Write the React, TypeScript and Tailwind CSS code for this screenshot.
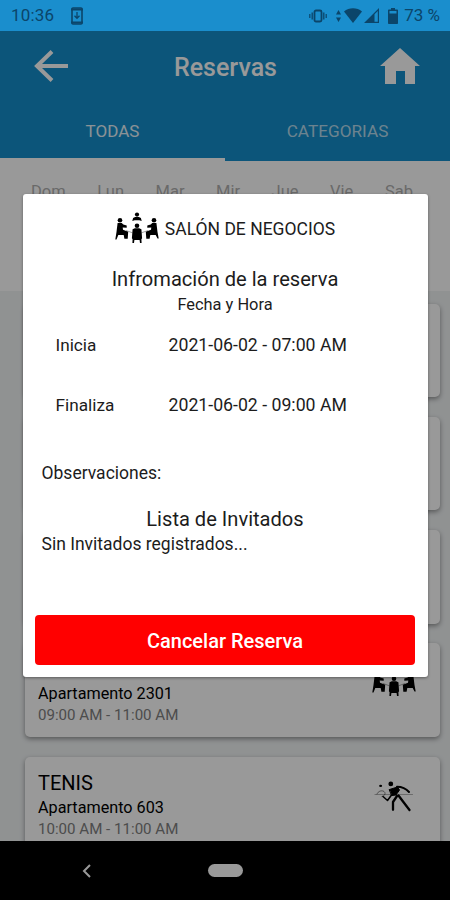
import type { ReactNode } from "react";

interface Booking {
  id: number;
  title?: string;
  unit?: string;
  time?: string;
  icon?: ReactNode;
}

function MeetingIcon({ className }: { className?: string }) {
  return (
    <svg viewBox="0 0 44 31" className={className} fill="currentColor">
      {/* back */}
      <circle cx="22" cy="2.6" r="2.100" />
      <path d="M17.300 9l.8-2.900 2-1.200h3.800l2 1.200.8 2.900-2.300-.7h-4.800z" />
      {/* left */}
      <circle cx="5" cy="8.300" r="2.300" />
      <path d="M2.600 11h4.200l1.500 1.600 3.400 1v2.200l-4-.3.300 2.300 5.200 2-.5 7H9.400l-.7-3.900H3.300L1.500 27.500H.3L1.500 20z" />
      {/* right */}
      <circle cx="39" cy="8.300" r="2.300" />
      <path d="M41.400 11h-4.200l-1.500 1.600-3.400 1v2.200l4-.3-.3 2.300-5.200 2 .5 7h3.300l.7-3.900h5.400l1.800 3.700h1.200L42.500 20z" />
      {/* front */}
      <circle cx="22" cy="13.800" r="2.300" />
      <path d="M17.600 17.300l2.200-1h4.400l2.200 1 .7 9-.7 1 .2 3.700H25l-.4-3h-5.200L19 31h-1.600l.2-3.700-.7-1z" />
      <path d="M11 18.500l6.500 2.300M33 18.500l-6.500 2.300" stroke="currentColor" strokeWidth=".7" opacity=".5" />
    </svg>
  );
}

function TennisIcon({ className }: { className?: string }) {
  return (
    <svg viewBox="0 0 40 31" className={className} fill="none" stroke="currentColor" strokeLinecap="round" strokeLinejoin="round">
      <circle cx="16.800" cy="2.900" r="2.400" fill="currentColor" stroke="none" />
      <ellipse cx="6.600" cy="4.900" rx="1.500" ry="1.100" fill="currentColor" stroke="none" />
      <path d="M1 13.500h37.500" strokeWidth="1.200" opacity=".3" />
      <path d="M3 13c1-3 5-4 7-2.500s1 4.500-2 5" strokeWidth=".9" opacity=".5" />
      <path d="M15.500 8.500l8-2.500 2 3-3.500 5-4 .5z" fill="currentColor" strokeWidth="1" />
      <path d="M23 5.700c5 0 9 1.800 12 5.300" strokeWidth="2" />
      <path d="M17.500 14l-4 5.500-4.500-4" strokeWidth="1.500" />
      <path d="M24.500 14.500l4.500 6 6.500 8.500" strokeWidth="2.300" />
      <path d="M23 15l-4 6v7.800" strokeWidth="2.300" />
    </svg>
  );
}

const days = ["Dom", "Lun", "Mar", "Mir", "Jue", "Vie", "Sab"];

const bookings: Booking[] = [
  { id: 1 },
  { id: 2 },
  { id: 3 },
  {
    id: 4,
    unit: "Apartamento 2301",
    time: "09:00 AM - 11:00 AM",
    icon: <MeetingIcon className="mr-[12px] mt-[22px] h-[31px] w-[44px]" />,
  },
  {
    id: 5,
    title: "TENIS",
    unit: "Apartamento 603",
    time: "10:00 AM - 11:00 AM",
    icon: <TennisIcon className="mr-[14px] mt-[24px] h-[31px] w-[40px]" />,
  },
];

function StatusBar() {
  return (
    <div className="flex h-[31px] shrink-0 items-center bg-[#1a8ecd] pl-[11px] pr-[10px] text-[#0b456a]">
      <span className="text-[17px] tracking-[0.2px]">10:36</span>
      <svg viewBox="0 0 12 18" className="ml-[17px] h-[18px] w-[12px]">
        <rect x="1" y="1" width="10" height="16" rx="1" fill="none" stroke="currentColor" strokeWidth="1.600" />
        <path d="M0 1.500h12v2H0zM0 14.500h12v2H0z" fill="currentColor" />
        <path d="M6 5v6M3.500 8.800L6 11.300l2.500-2.500" fill="none" stroke="currentColor" strokeWidth="1.300" />
      </svg>
      <div className="ml-auto flex items-center">
        <svg viewBox="0 0 18 14" className="h-[14px] w-[18px]" fill="none" stroke="currentColor">
          <rect x="5.500" y="1.500" width="7" height="11" rx="1.500" strokeWidth="1.800" />
          <path d="M3.200 3.500v7M14.800 3.500v7" strokeWidth="1.300" />
          <path d="M.8 5v4M17.200 5v4" strokeWidth="1.200" />
        </svg>
        <svg viewBox="0 0 5 12" className="ml-[9px] h-[12px] w-[5px]" fill="currentColor">
          <path d="M2.500 0L5 4.500H0zM2.500 12L0 7.500h5z" />
        </svg>
        <svg viewBox="0 0 18 15" className="ml-[3px] h-[15px] w-[18px]" fill="currentColor">
          <path d="M0 3.500C5-.8 13-.8 18 3.500L9 15z" />
        </svg>
        <svg viewBox="0 0 15 15" className="ml-[2px] h-[15px] w-[15px]" fill="currentColor">
          <path d="M15 0v15H0zM13.800 3l-3.300 3.300v7.500h3.300z" fillRule="evenodd" />
        </svg>
        <svg viewBox="0 0 10 16" className="ml-[9px] h-[16px] w-[10px]" fill="currentColor">
          <path d="M3 0h4v1.500h2.200c.5 0 .8.300.8.800v12.900c0 .5-.3.800-.8.800H.8c-.5 0-.8-.3-.8-.8V2.300c0-.5.3-.8.8-.8H3zM1.500 3v2.500h7V3z" fillRule="evenodd" />
        </svg>
        <span className="ml-[6px] text-[17px]">73 %</span>
      </div>
    </div>
  );
}

function BookingCard({ booking }: { booking: Booking }) {
  return (
    <div className="flex h-[93.500px] shrink-0 justify-between rounded-[5px] bg-white pl-[13px] pr-[12px] shadow-[0_2px_5px_rgba(0,0,0,0.4)]">
      <div className="pt-[14px]">
        <div className="h-[24px] text-[20px] leading-[24px] text-black">{booking.title}</div>
        <div className="mt-[2px] text-[16.200px] leading-[22px] text-black">{booking.unit}</div>
        <div className="text-[15.100px] leading-[21px] text-[#808080]">{booking.time}</div>
      </div>
      {booking.icon}
    </div>
  );
}

function ReservationModal() {
  return (
    <div className="h-[483px] w-[405px] rounded-[3px] bg-white text-[#1c1c1c] shadow-[0_1px_3px_rgba(0,0,0,0.4)]">
      <div className="flex h-[69px] items-center justify-center">
        <MeetingIcon className="mb-[3px] mr-[6px] h-[31px] w-[44px] text-black" />
        <span className="pt-[1px] text-[17.500px]">SALÓN DE NEGOCIOS</span>
      </div>
      <div className="mt-[3px] text-center text-[20.100px] leading-[26px]">Infromación de la reserva</div>
      <div className="pt-[1px] text-center text-[16.400px] leading-[24px]">Fecha y Hora</div>
      <div className="flex h-[60px] pl-[33px] pt-[17px] text-[17.200px] leading-[22px]">
        <span className="w-[113px]">Inicia</span>
        <span className="text-[17.700px]">2021-06-02 - 07:00 AM</span>
      </div>
      <div className="flex h-[60px] pl-[33px] pt-[17px] text-[17.200px] leading-[22px]">
        <span className="w-[113px]">Finaliza</span>
        <span className="text-[17.700px]">2021-06-02 - 09:00 AM</span>
      </div>
      <div className="mt-[25px] pl-[19px] text-[17.500px] leading-[22px]">Observaciones:</div>
      <div className="mt-[22px] text-center text-[20.100px] leading-[26px]">Lista de Invitados</div>
      <div className="pl-[19px] text-[17.500px] leading-[25px]">Sin Invitados registrados...</div>
      <button className="mx-[12px] mt-[58px] block h-[50px] w-[380px] rounded-[4px] bg-[#ff0000] pl-[1px] pt-[1px] text-[20px] font-medium text-white">
        Cancelar Reserva
      </button>
    </div>
  );
}

export default function App() {
  return (
    <div className="flex h-[900px] w-[450px] flex-col overflow-hidden bg-black font-['Roboto',sans-serif]">
      <StatusBar />

      <div className="relative flex h-[810px] shrink-0 flex-col overflow-hidden bg-[#f0f3f4]">
        <header className="shrink-0 bg-[#148ecb]">
          <div className="flex h-[70px] items-center justify-between pl-[34px] pr-[30px] text-white">
            <svg viewBox="0 0 34 32" className="h-[32px] w-[34px]" fill="none" stroke="currentColor" strokeWidth="4">
              <path d="M34 16H3M18 1.500L3 16l15 14.500" />
            </svg>
            <h1 className="pl-[3px] pt-[3px] text-[25px] font-medium">Reservas</h1>
            <svg viewBox="0 0 40 36" className="-mt-[1px] h-[36px] w-[40px]" fill="currentColor">
              <path d="M20 0l20 18h-5v18H25V23h-9v13H5V18H0z" />
            </svg>
          </div>
          <div className="flex h-[60px] text-center text-[17px] leading-[60px]">
            <div className="box-border h-[60px] w-1/2 border-b-[3px] border-white text-white/90">TODAS</div>
            <div className="h-[60px] w-1/2 text-[17.200px] text-white/70">CATEGORIAS</div>
          </div>
        </header>

        <div className="flex h-[130px] shrink-0 justify-between bg-white pl-[31px] pr-[37px] pt-[20px] text-[16.500px] leading-[22px] text-[#b0b0b0]">
          {days.map((d) => (
            <span key={d}>{d}</span>
          ))}
        </div>

        <div className="flex flex-col gap-[19.800px] pl-[25px] pr-[10px] pt-[12.500px]">
          {bookings.map((b) => (
            <BookingCard key={b.id} booking={b} />
          ))}
        </div>

        <div className="absolute inset-0 flex justify-center bg-black/40 pt-[163px]">
          <ReservationModal />
        </div>
      </div>

      <nav className="flex h-[59px] shrink-0 items-center bg-black pl-[82px] text-[#999]">
        <svg viewBox="0 0 9 14" className="h-[14px] w-[9px]" fill="none" stroke="currentColor" strokeWidth="2">
          <path d="M8 1L2 7l6 6" />
        </svg>
        <span className="ml-[117px] h-[13px] w-[35px] rounded-full bg-[#999]" />
      </nav>
    </div>
  );
}
